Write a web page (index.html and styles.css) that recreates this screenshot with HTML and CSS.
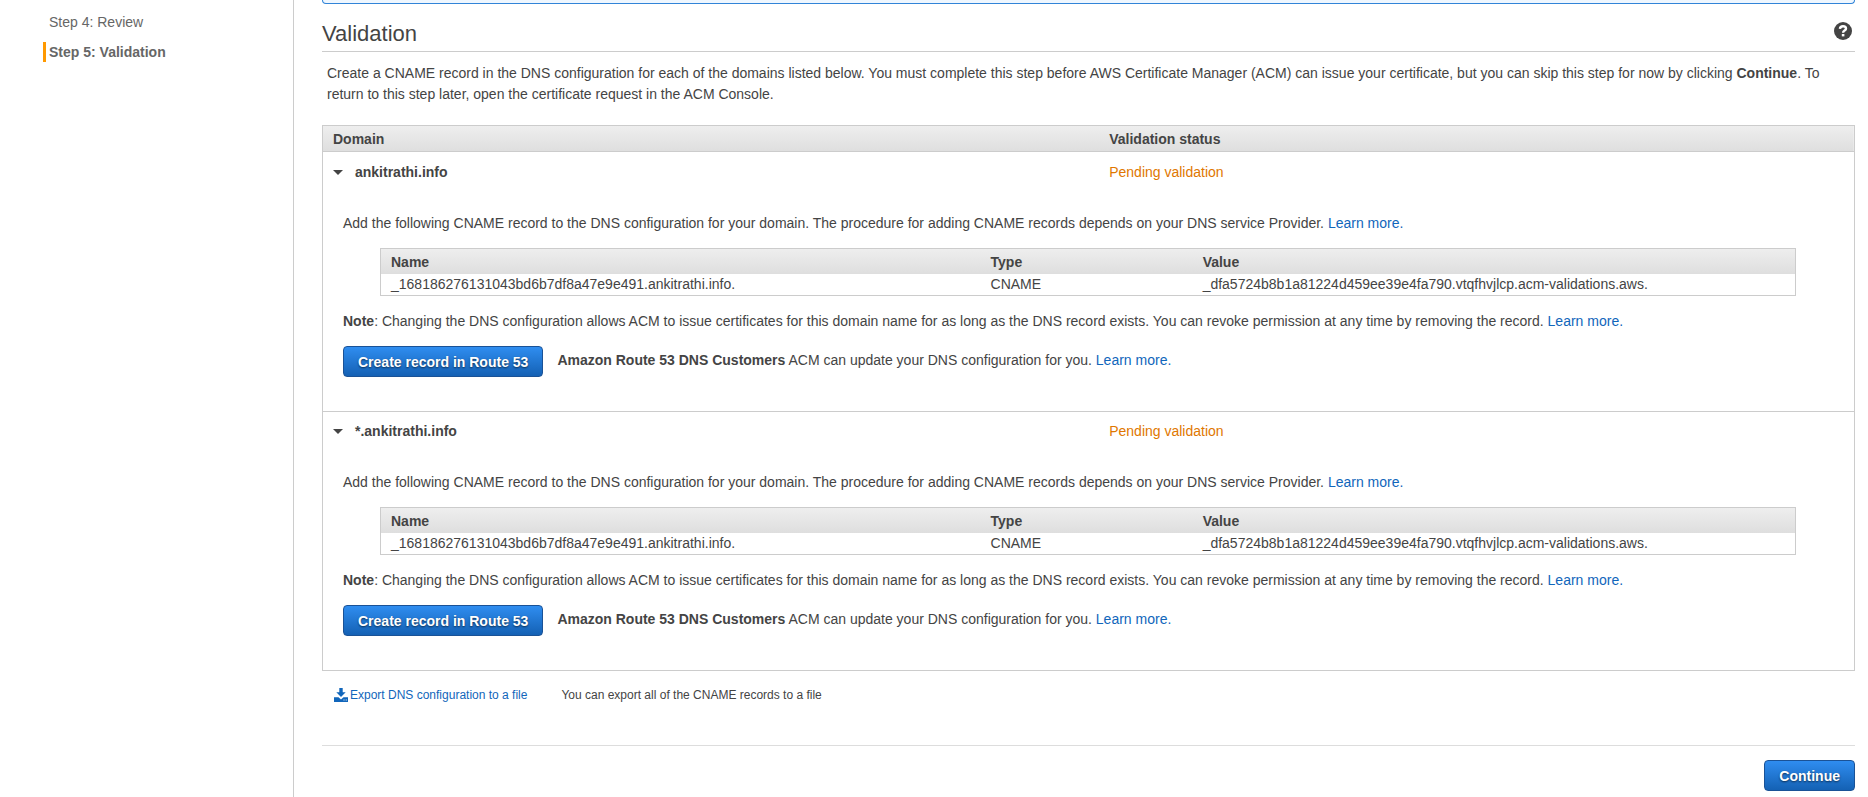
FILE: index.html
```
<!DOCTYPE html>
<html lang="en">
<head>
<meta charset="utf-8">
<title>Validation</title>
<link rel="stylesheet" href="styles.css">
</head>
<body>
<div class="page">
  <nav class="steps">
    <ol class="steps-list">
      <li class="step">Step 4: Review</li>
      <li class="step step-current" aria-current="step">Step 5: Validation</li>
    </ol>
  </nav>
  <main class="content">
    <div class="notice"></div>
    <header class="title-bar">
      <h1 class="title">Validation</h1>
      <button class="help" type="button" aria-label="Help">
        <svg class="help-icon" viewBox="0 0 18 18" aria-hidden="true">
          <circle cx="9" cy="9" r="9" fill="#444"/>
          <path d="M5.9 6.9C6.1 5 7.300 4.300 9 4.300c1.800 0 3 .9 3 2.400 0 1.900-2.900 1.900-2.900 4" fill="none" stroke="#fff" stroke-width="2.400"/>
          <rect x="7.800" y="12" width="2.600" height="2.400" fill="#fff"/>
        </svg>
      </button>
    </header>
    <p class="intro">Create a CNAME record in the DNS configuration for each of the domains listed below. You must complete this step before AWS Certificate Manager (ACM) can issue your certificate, but you can skip this step for now by clicking <b>Continue</b>. To return to this step later, open the certificate request in the ACM Console.</p>

    <table class="domains">
      <thead>
        <tr><th class="col-domain">Domain</th><th>Validation status</th></tr>
      </thead>
      <tbody>
        <tr class="domain-row">
          <th scope="row"><button class="toggle" type="button" aria-expanded="true"><span class="caret"></span>ankitrathi.info</button></th>
          <td class="pending">Pending validation</td>
        </tr>
        <tr>
          <td class="detail" colspan="2">
            <p class="text">Add the following CNAME record to the DNS configuration for your domain. The procedure for adding CNAME records depends on your DNS service Provider. <a class="link" href="#">Learn more.</a></p>
            <table class="record">
              <thead><tr><th class="col-name">Name</th><th class="col-type">Type</th><th>Value</th></tr></thead>
              <tbody><tr><td>_168186276131043bd6b7df8a47e9e491.ankitrathi.info.</td><td>CNAME</td><td>_dfa5724b8b1a81224d459ee39e4fa790.vtqfhvjlcp.acm-validations.aws.</td></tr></tbody>
            </table>
            <p class="text"><b>Note</b>: Changing the DNS configuration allows ACM to issue certificates for this domain name for as long as the DNS record exists. You can revoke permission at any time by removing the record. <a class="link" href="#">Learn more.</a></p>
            <div class="route53">
              <button class="button" type="button">Create record in Route 53</button>
              <p class="route53-text"><b>Amazon Route 53 DNS Customers</b> ACM can update your DNS configuration for you. <a class="link" href="#">Learn more.</a></p>
            </div>
          </td>
        </tr>
      </tbody>
      <tbody>
        <tr class="domain-row">
          <th scope="row"><button class="toggle" type="button" aria-expanded="true"><span class="caret"></span>*.ankitrathi.info</button></th>
          <td class="pending">Pending validation</td>
        </tr>
        <tr>
          <td class="detail" colspan="2">
            <p class="text">Add the following CNAME record to the DNS configuration for your domain. The procedure for adding CNAME records depends on your DNS service Provider. <a class="link" href="#">Learn more.</a></p>
            <table class="record">
              <thead><tr><th class="col-name">Name</th><th class="col-type">Type</th><th>Value</th></tr></thead>
              <tbody><tr><td>_168186276131043bd6b7df8a47e9e491.ankitrathi.info.</td><td>CNAME</td><td>_dfa5724b8b1a81224d459ee39e4fa790.vtqfhvjlcp.acm-validations.aws.</td></tr></tbody>
            </table>
            <p class="text"><b>Note</b>: Changing the DNS configuration allows ACM to issue certificates for this domain name for as long as the DNS record exists. You can revoke permission at any time by removing the record. <a class="link" href="#">Learn more.</a></p>
            <div class="route53">
              <button class="button" type="button">Create record in Route 53</button>
              <p class="route53-text"><b>Amazon Route 53 DNS Customers</b> ACM can update your DNS configuration for you. <a class="link" href="#">Learn more.</a></p>
            </div>
          </td>
        </tr>
      </tbody>
    </table>

    <div class="export">
      <a class="link export-link" href="#">
        <svg class="export-icon" viewBox="0 0 14 14" aria-hidden="true">
          <path d="M5.300 0h3.400v4.300h3L7 9.100 2.300 4.300h3z" fill="currentColor"/>
          <path fill-rule="evenodd" d="M0 9.300h4.500L7 11.500l2.500-2.200H14V14H0zM9.500 11.600v1h1v-1zM11.700 11.600v1h1v-1z" fill="currentColor"/>
        </svg>Export DNS configuration to a file</a>
      <span>You can export all of the CNAME records to a file</span>
    </div>

    <footer class="actions">
      <button class="button" type="button">Continue</button>
    </footer>
  </main>
</div>
</body>
</html>
```
FILE: styles.css
```
* {
  box-sizing: border-box;
}

body {
  margin: 0;
  background: #fff;
  color: #444;
  font: 14px/21px "Helvetica Neue", "Liberation Sans", Arial, sans-serif;
}

p,
h1 {
  margin: 0;
}

.page {
  display: grid;
  grid-template-columns: 294px 1fr;
  min-height: 100vh;
}

.steps {
  padding: 12px 0 0 43px;
  border-right: 1px solid #ccc;
}

.steps-list {
  display: grid;
  gap: 10px;
  margin: 0;
  padding: 0;
  list-style: none;
}

.step {
  padding-left: 3px;
  border-left: 3px solid transparent;
  color: #666;
  line-height: 20px;
}

.step-current {
  border-left-color: #ff9900;
  font-weight: bold;
}

.content {
  min-width: 0;
  padding: 0 13px 6px 28px;
}

.notice {
  height: 4px;
  border: 1px solid #3184d8;
  border-top: 0;
  border-radius: 0 0 4px 4px;
  background: #eff7ff;
}

.title-bar {
  display: flex;
  justify-content: space-between;
  align-items: center;
  padding: 15px 3px 2px 0;
  border-bottom: 1px solid #ccc;
}

.title {
  font-size: 22px;
  line-height: 30px;
  font-weight: normal;
}

.help {
  padding: 0 0 6px;
  border: 0;
  background: none;
}

.help-icon {
  display: block;
  width: 18px;
  height: 18px;
}

.intro {
  padding: 11px 13px 20px 5px;
}

.domains,
.record {
  width: 100%;
  border: 1px solid #ccc;
  border-spacing: 0;
  table-layout: fixed;
  text-align: left;
}

.domains th,
.domains td {
  padding: 0 10px;
}

.domains thead {
  background: linear-gradient(#eee, #dedede);
}

.domains thead th {
  padding: 3px 10px 1px;
}

.domains > thead th {
  border-bottom: 1px solid #ccc;
}

.domains .col-domain {
  width: 50.7%;
}

.domains .domain-row th,
.domains .domain-row td {
  padding: 10px;
}

.domains .domain-row .pending {
  color: #e07700;
}

.toggle {
  display: flex;
  align-items: center;
  gap: 12px;
  padding: 0;
  border: 0;
  background: none;
  color: inherit;
  font: inherit;
}

.caret {
  border: 5px solid transparent;
  border-top-color: #444;
  border-bottom: 0;
}

.domains .detail {
  padding: 20px 58px 34px 20px;
}

.domains tbody + tbody .domain-row > * {
  border-top: 1px solid #ccc;
  padding-top: 9px;
}

.record {
  width: calc(100% - 37px);
  margin: 14px 0 15px 37px;
}

.record .col-name {
  width: 42.4%;
}

.record .col-type {
  width: 15%;
}

.link {
  color: #1166bb;
  text-decoration: none;
}

.route53 {
  display: flex;
  align-items: flex-start;
  gap: 14px;
  margin-top: 14px;
}

.route53-text {
  padding-top: 4px;
}

.button {
  padding: 5px 14px 3px;
  border: 1px solid #1a5296;
  border-radius: 4px;
  background: linear-gradient(#2f8df0, #1461b4);
  color: #fff;
  font: bold 14px/21px "Helvetica Neue", "Liberation Sans", Arial, sans-serif;
  text-shadow: 0 1px 2px rgba(0, 0, 0, 0.6);
}

.export {
  display: flex;
  gap: 34px;
  padding: 14px 12px 40px;
  font-size: 12px;
  line-height: 20px;
}

.export-link {
  display: flex;
  align-items: center;
  gap: 2px;
}

.export-icon {
  width: 14px;
  height: 14px;
}

.actions {
  display: flex;
  justify-content: flex-end;
  padding-top: 14px;
  border-top: 1px solid #ddd;
}
```
